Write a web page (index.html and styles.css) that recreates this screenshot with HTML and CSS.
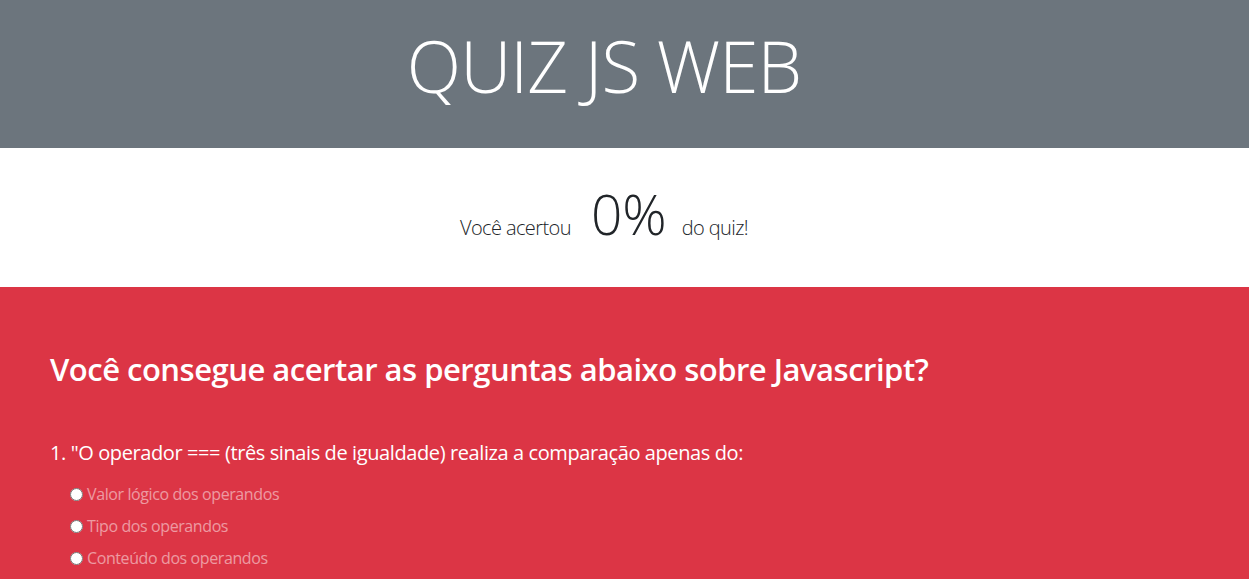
FILE: index.html
```html
<!DOCTYPE html>
<html lang="pt-BR">
<head>
<meta charset="utf-8">
<title>Quiz JS Web</title>
<link rel="stylesheet" href="styles.css">
</head>
<body>
<header class="hero">
  <h1 class="hero-title">QUIZ JS WEB</h1>
</header>
<section class="score">
  <p class="score-line">
    <span class="score-label">Você acertou</span>
    <span class="score-value">0%</span>
    <span class="score-label">do quiz!</span>
  </p>
</section>
<main class="quiz">
  <h2 class="quiz-heading">Você consegue acertar as perguntas abaixo sobre Javascript?</h2>
  <form class="quiz-form">
    <div class="question">
      <p class="question-text">1. "O operador === (três sinais de igualdade) realiza a comparação apenas do:</p>
      <label class="option"><input type="radio" name="q1" value="a"><span>Valor lógico dos operandos</span></label>
      <label class="option"><input type="radio" name="q1" value="b"><span>Tipo dos operandos</span></label>
      <label class="option"><input type="radio" name="q1" value="c"><span>Conteúdo dos operandos</span></label>
    </div>
  </form>
</main>
</body>
</html>
```

FILE: styles.css
```css
* { box-sizing: border-box; }
html, body { margin: 0; padding: 0; }
body {
  font-family: "Open Sans", "Noto Sans", sans-serif;
  color: #212529;
  background: #fff;
}
.hero {
  background: #6c757d;
  height: 148px;
  display: flex;
  align-items: center;
  justify-content: center;
  padding-right: 41px;
  padding-bottom: 16px;
}
.hero-title {
  margin: 0;
  font-size: 71px;
  font-weight: 300;
  line-height: 1.2;
  letter-spacing: -0.9px;
  color: #fff;
}
.score {
  height: 139px;
  display: flex;
  align-items: center;
  justify-content: center;
  padding-right: 41px;
  padding-bottom: 8px;
}
.score-line {
  margin: 0;
  display: flex;
  align-items: baseline;
}
.score-label {
  font-size: 20px;
  font-weight: 300;
  letter-spacing: -0.6px;
}
.score-value {
  margin: 0 15px 0 20px;
  font-size: 55px;
  font-weight: 300;
  line-height: 1.2;
}
.quiz {
  background: #dc3545;
  color: #fff;
  padding: 64px 50px 40px;
  min-height: 292px;
}
.quiz-heading {
  margin: 0 0 50px;
  font-size: 31px;
  font-weight: 600;
  line-height: 1.2;
  letter-spacing: -0.5px;
}
.question-text {
  margin: 0 0 10px;
  font-size: 20px;
  line-height: 1.5;
  letter-spacing: -0.4px;
}
.option {
  display: flex;
  align-items: center;
  height: 32px;
  padding-left: 20px;
  font-size: 16px;
  letter-spacing: -0.4px;
  color: rgba(255,255,255,0.5);
}
.option input {
  margin: 0 4px 0 0;
  width: 13px;
  height: 13px;
}
```
